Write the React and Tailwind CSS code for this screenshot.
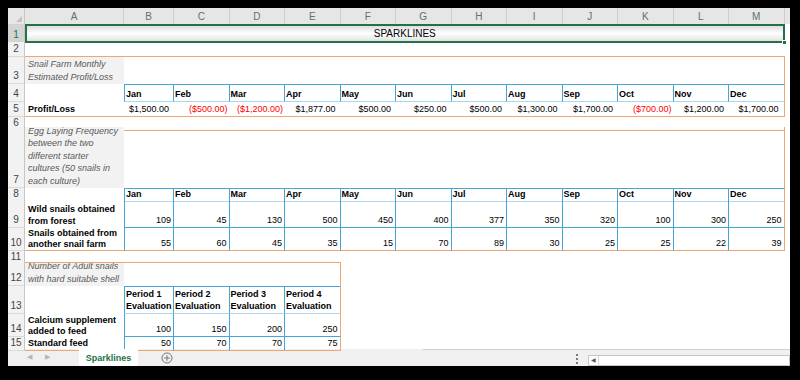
import React from "react";

const GRID = "grid grid-cols-[17px_99px_50px_repeat(11,55.5px)_1fr]";

const OB = "border-b border-b-[#f0a672]";
const OR = "border-r border-r-[#f0a672]";
const OT = "border-t border-t-[#f0a672]";
const BT = "border-t border-t-[#45a5d6]";
const BR = "border-r border-r-[#45a5d6]";
const BL = "border-l border-l-[#45a5d6]";
const BB = "border-b border-b-[#45a5d6]";
const LBB = "border-b border-b-[#a8d9f0]";

const LETTERS = ["A", "B", "C", "D", "E", "F", "G", "H", "I", "J", "K", "L", "M"];
const MONTHS = ["Jan", "Feb", "Mar", "Apr", "May", "Jun", "Jul", "Aug", "Sep", "Oct", "Nov", "Dec"];

const PROFIT = [
    ["$1,500.00"], ["($500.00)", true], ["($1,200.00)", true], ["$1,877.00"], ["$500.00"], ["$250.00"],
    ["$500.00"], ["$1,300.00"], ["$1,700.00"], ["($700.00)", true], ["$1,200.00"], ["$1,700.00"]
];
const WILD = [109, 45, 130, 500, 450, 400, 377, 350, 320, 100, 300, 250];
const FARM = [55, 60, 45, 35, 15, 70, 89, 30, 25, 25, 22, 39];
const PERIODS = ["Period 1", "Period 2", "Period 3", "Period 4"];
const CALCIUM = [100, 150, 200, 250];
const STANDARD = [50, 70, 70, 75];

function C({className = "", children}) {
    return (
        <div className={"flex items-end min-w-0 overflow-hidden whitespace-nowrap leading-[11px] pb-px " + className}>
            {children}
        </div>
    );
}

function RowHead({n, active}) {
    return (
        <div className={`flex items-end justify-center pb-px text-[10px] leading-[12px] border-r border-r-[#c6c6c6] border-b border-b-[#dadada] ${active ? "bg-[#d4d4d4] text-[#217346]" : "bg-[#f2f2f2] text-[#444]"}`}>
            {n}
        </div>
    );
}

function Empty({count, className = ""}) {
    return Array.from({length: count}, (_, i) => <C key={"e" + i} className={className}/>);
}

export default function App() {
    return (
        <div className="w-[800px] h-[380px] bg-black pt-[8px] pl-[8px] font-['Liberation_Sans',Arial,sans-serif] text-[9px] text-black">
            <div className="w-[782px] bg-white">
                {/* column headers */}
                <div className={`${GRID} h-[16px] bg-[#e6e6e6]`}>
                    <div className="relative border-r border-r-[#c6c6c6]">
                        <svg className="absolute right-[2px] bottom-[2px]" width="6" height="6" viewBox="0 0 6 6">
                            <polygon points="6,0 6,6 0,6" fill="#c2c2c2"/>
                        </svg>
                    </div>
                    {LETTERS.map(l =>
                        <div key={l} className="flex items-end justify-center pb-px text-[10px] leading-[12px] text-[#5b7464] border-r border-r-[#cdcdcd]">
                            {l}
                        </div>)}
                    <div/>
                </div>

                {/* 1 */}
                <div className={`${GRID} h-[18px]`}>
                    <RowHead n="1" active/>
                    <div className="col-span-13 relative flex items-center justify-center border-2 border-[#217346] bg-gradient-to-b from-[#dedede] via-white to-[#e2e2e2] text-[10px]">
                        SPARKLINES
                        <div className="absolute right-[-4px] bottom-[-4px] w-[5px] h-[5px] bg-[#217346] border border-white"/>
                    </div>
                    <div/>
                </div>

                {/* 2 */}
                <div className={`${GRID} h-[15px]`}>
                    <RowHead n="2"/>
                    <Empty count={13} className={OB}/>
                    <div/>
                </div>

                {/* 3 */}
                <div className={`${GRID} h-[27px]`}>
                    <RowHead n="3"/>
                    <C className="bg-[#f2f2f2] italic text-[#595959] pl-[3px] whitespace-normal">
                        <div className="leading-[12.5px]">Snail Farm Monthly<br/>Estimated Profit/Loss</div>
                    </C>
                    <Empty count={11}/>
                    <C className={OR}/>
                    <div/>
                </div>

                {/* 4 */}
                <div className={`${GRID} h-[18px]`}>
                    <RowHead n="4"/>
                    <C/>
                    {MONTHS.map((m, i) =>
                        <C key={m} className={`${BT} ${LBB} ${i === 0 ? BL : ""} ${i === 11 ? OR : BR} font-bold pl-px`}>{m}</C>)}
                    <div/>
                </div>

                {/* 5 */}
                <div className={`${GRID} h-[15px]`}>
                    <RowHead n="5"/>
                    <C className={`${OB} font-bold pl-[3px]`}>Profit/Loss</C>
                    {PROFIT.map(([v, neg], i) =>
                        <C key={i} className={`${OB} ${i === 11 ? OR : ""} justify-end ${neg ? "text-[#ff0000] pr-[2px]" : "pr-[5px]"}`}>{v}</C>)}
                    <div/>
                </div>

                {/* 6 */}
                <div className={`${GRID} h-[10px]`}>
                    <RowHead n="6"/>
                    <Empty count={13} className={OB}/>
                    <div/>
                </div>

                {/* 7 */}
                <div className={`${GRID} h-[61px]`}>
                    <RowHead n="7"/>
                    <C className="bg-[#f2f2f2] italic text-[#595959] pl-[3px] whitespace-normal">
                        <div className="leading-[12.5px]">
                            Egg Laying Frequency<br/>between the two<br/>different starter<br/>cultures (50 snails in<br/>each culture)
                        </div>
                    </C>
                    <Empty count={11}/>
                    <C className={OR}/>
                    <div/>
                </div>

                {/* 8 */}
                <div className={`${GRID} h-[13px]`}>
                    <RowHead n="8"/>
                    <C/>
                    {MONTHS.map((m, i) =>
                        <C key={m} className={`${BT} ${LBB} ${i === 0 ? BL : ""} ${i === 11 ? OR : BR} font-bold pl-px pb-0`}>{m}</C>)}
                    <div/>
                </div>

                {/* 9 */}
                <div className={`${GRID} h-[27px]`}>
                    <RowHead n="9"/>
                    <C className="font-bold pl-[3px] pb-[3px]">
                        <div className="leading-[11.5px]">Wild snails obtained<br/>from forest</div>
                    </C>
                    {WILD.map((v, i) =>
                        <C key={i} className={`${BB} ${i === 0 ? BL : ""} ${i === 11 ? OR : BR} justify-end pr-[2px]`}>{v}</C>)}
                    <div/>
                </div>

                {/* 10 */}
                <div className={`${GRID} h-[23px]`}>
                    <RowHead n="10"/>
                    <C className={`${OB} font-bold pl-[3px]`}>
                        <div className="leading-[10.5px]">Snails obtained from<br/>another snail farm</div>
                    </C>
                    {FARM.map((v, i) =>
                        <C key={i} className={`${OB} ${i === 0 ? BL : ""} ${i === 11 ? OR : BR} justify-end pr-[2px]`}>{v}</C>)}
                    <div/>
                </div>

                {/* 11 */}
                <div className={`${GRID} h-[11px]`}>
                    <RowHead n="11"/>
                    <Empty count={13}/>
                    <div/>
                </div>

                {/* 12 */}
                <div className={`${GRID} h-[24px]`}>
                    <RowHead n="12"/>
                    <C className={`${OT} bg-[#f2f2f2] italic text-[#595959] pl-[3px] whitespace-normal`}>
                        <div className="leading-[12.5px]">Number of Adult snails<br/>with hard suitable shell</div>
                    </C>
                    <Empty count={3} className={OT}/>
                    <C className={`${OT} ${OR}`}/>
                    <Empty count={8}/>
                    <div/>
                </div>

                {/* 13 */}
                <div className={`${GRID} h-[28px]`}>
                    <RowHead n="13"/>
                    <C/>
                    {PERIODS.map((p, i) =>
                        <C key={p} className={`${BT} ${LBB} ${i === 0 ? BL : ""} ${i === 3 ? OR : BR} font-bold pl-px pb-[3px]`}>
                            <div className="leading-[11.5px]">{p}<br/>Evaluation</div>
                        </C>)}
                    <Empty count={8}/>
                    <div/>
                </div>

                {/* 14 */}
                <div className={`${GRID} h-[23px]`}>
                    <RowHead n="14"/>
                    <C className="font-bold pl-[3px]">
                        <div className="leading-[10.5px]">Calcium supplement<br/>added to feed</div>
                    </C>
                    {CALCIUM.map((v, i) =>
                        <C key={i} className={`${BB} ${i === 0 ? BL : ""} ${i === 3 ? OR : BR} justify-end pr-[2px]`}>{v}</C>)}
                    <Empty count={8}/>
                    <div/>
                </div>

                {/* 15 */}
                <div className={`${GRID} h-[12px]`}>
                    <RowHead n="15"/>
                    <C className={`${OB} font-bold pl-[3px] pb-0`}>Standard feed</C>
                    {STANDARD.map((v, i) =>
                        <C key={i} className={`${OB} ${i === 0 ? BL : ""} ${i === 3 ? OR : BR} justify-end pr-[2px] pb-0`}>{v}</C>)}
                    <Empty count={8}/>
                    <div/>
                </div>

                {/* sheet tabs */}
                <div className="h-[17px] flex items-stretch bg-[#f0f0f0]">
                    <div className="w-[71px] flex items-center pl-[19px] gap-[13px] text-[7px] text-[#b5b5b5]">
                        <span>◀</span>
                        <span>▶</span>
                    </div>
                    <div className="w-[59px] bg-white flex items-center justify-center pt-[2px] font-bold text-[9px] text-[#217346]">
                        Sparklines
                    </div>
                    <div className="w-[23px]"/>
                    <div className="flex items-center">
                        <svg width="12" height="12" viewBox="0 0 12 12">
                            <circle cx="6" cy="6" r="5" fill="none" stroke="#777" strokeWidth="1"/>
                            <path d="M6 3.2v5.6M3.2 6h5.6" stroke="#777" strokeWidth="1"/>
                        </svg>
                    </div>
                    <div className="flex-1 border-t border-t-[#cfcfcf] ml-[250px] flex items-center justify-end pr-[1px]">
                        <div className="flex flex-col gap-[2px] mr-[9px] mt-[2px]">
                            <div className="w-[2px] h-[2px] bg-[#7a7a7a]"/>
                            <div className="w-[2px] h-[2px] bg-[#7a7a7a]"/>
                            <div className="w-[2px] h-[2px] bg-[#7a7a7a]"/>
                        </div>
                    </div>
                    <div className="w-[202px] border-t border-t-[#cfcfcf] flex items-end">
                        <div className="w-full h-[11px] flex border border-[#c6c6c6] bg-white">
                            <div className="w-[10px] flex items-center justify-center border-r border-r-[#d6d6d6] text-[6px] text-[#555]">◀</div>
                            <div className="flex-1"/>
                        </div>
                    </div>
                </div>
            </div>
        </div>
    );
}
